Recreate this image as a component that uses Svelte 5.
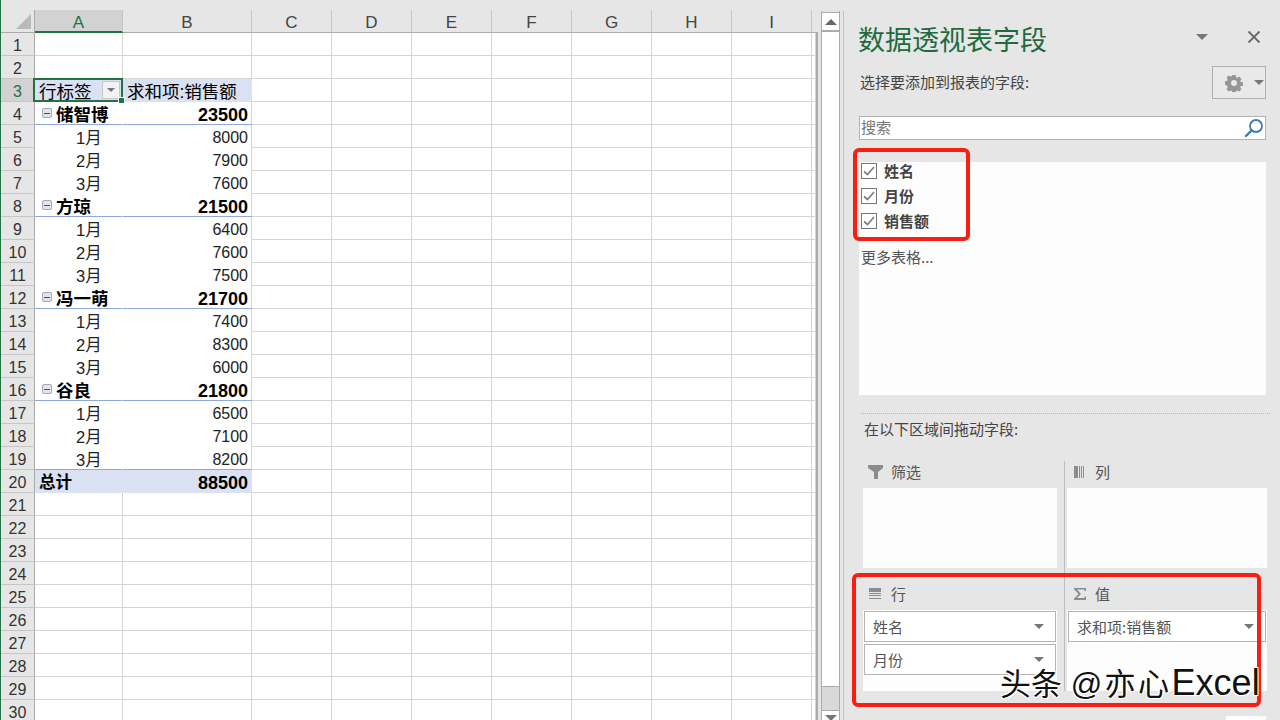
<script>
	const columns = ['A', 'B', 'C', 'D', 'E', 'F', 'G', 'H', 'I', ''];
	const blanks = ['C', 'D', 'E', 'F', 'G', 'H', 'I', ''];

	const groups = [
		{ name: '储智博', total: 23500, months: [8000, 7900, 7600] },
		{ name: '方琼', total: 21500, months: [6400, 7600, 7500] },
		{ name: '冯一萌', total: 21700, months: [7400, 8300, 6000] },
		{ name: '谷良', total: 21800, months: [6500, 7100, 8200] }
	];

	// flatten the pivot into sheet rows, starting at row 4
	const pivotRows = [];
	for (const g of groups) {
		pivotRows.push({ kind: 'group', label: g.name, value: g.total });
		g.months.forEach((v, i) => {
			pivotRows.push({ kind: 'month', label: `${i + 1}月`, value: v });
		});
	}

	const rowNumbers = Array.from({ length: 30 }, (_, i) => i + 1);

	function pivotAt(n) {
		return pivotRows[n - 4];
	}

	const fields = ['姓名', '月份', '销售额'];
</script>

<div class="app">
	<div class="sheet">
		<div class="grid">
			<div class="corner"><span class="corner-tri"></span></div>
			{#each columns as col, i}
				<div class="col-head" class:active={i === 0} class:stub={col === ''}>{col}</div>
			{/each}

			{#each rowNumbers as n}
				{@const row = pivotAt(n)}
				<div class="row-head" class:active={n === 3}>{n}</div>

				{#if n === 3}
					<div class="cell pivot-head a3">
						<span>行标签</span>
						<span class="filter-btn"><i class="tri small"></i></span>
						<span class="handle"></span>
					</div>
					<div class="cell pivot-head">求和项:销售额</div>
				{:else if n === 20}
					<div class="cell total">总计</div>
					<div class="cell total num-bold">88500</div>
				{:else if row && row.kind === 'group'}
					<div class="cell group">
						<span class="collapse"><i></i></span>{row.label}
					</div>
					<div class="cell group num-bold">{row.value}</div>
				{:else if row}
					<div class="cell month" class:before-total={n === 19}>{row.label}</div>
					<div class="cell num" class:before-total={n === 19}>{row.value}</div>
				{:else}
					<div class="cell"></div>
					<div class="cell"></div>
				{/if}

				{#each blanks as _}
					<div class="cell"></div>
				{/each}
			{/each}
		</div>
	</div>

	<div class="scrollbar">
		<div class="scroll-btn top"><i class="tri up"></i></div>
		<div class="scroll-track"></div>
		<div class="scroll-rest"></div>
		<div class="scroll-btn bottom"><i class="tri"></i></div>
	</div>

	<aside class="panel">
		<header class="panel-head">
			<h1>数据透视表字段</h1>
			<i class="tri head-tri"></i>
			<svg class="close" width="14" height="14" viewBox="0 0 14 14">
				<path d="M1.5 1.5l11 11M12.5 1.5l-11 11" stroke="#6a6a6a" stroke-width="1.8" fill="none" />
			</svg>
		</header>

		<div class="choose">
			<span>选择要添加到报表的字段:</span>
			<div class="gear-btn">
				<svg width="18" height="18" viewBox="0 0 18 18">
					<path
						fill="#969696"
						fill-rule="evenodd"
						d="M7.3 1h3.4l.4 2.2 1.3.6 1.9-1.2 2.2 2.3-1.2 1.8.5 1.4 2.2.4v3.2l-2.2.4-.5 1.4 1.2 1.8-2.2 2.3-1.9-1.2-1.3.6-.4 1.9H7.3l-.4-1.9-1.3-.6-1.9 1.2-2.2-2.3 1.2-1.8-.5-1.4L0 10.500V7.300l2.2-.4.5-1.400L1.500 3.700l2.200-2.300 1.900 1.200 1.300-.6zM9 6a3 3 0 1 0 0 6 3 3 0 0 0 0-6z"
					/>
				</svg>
				<i class="tri gear-tri"></i>
			</div>
		</div>

		<div class="search">
			<span>搜索</span>
			<svg width="20" height="20" viewBox="0 0 20 20">
				<circle cx="12" cy="8" r="6" fill="none" stroke="#3f78b4" stroke-width="1.8" />
				<path d="M7.500 12.500L2 18" stroke="#3f78b4" stroke-width="2.400" stroke-linecap="round" />
			</svg>
		</div>

		<div class="field-list">
			{#each fields as f}
				<label class="field">
					<span class="check">
						<svg width="12" height="10" viewBox="0 0 12 10">
							<path d="M1 5.500l3.500 3L11 1" stroke="#808080" stroke-width="1.700" fill="none" />
						</svg>
					</span>
					<b>{f}</b>
				</label>
			{/each}
			<div class="more">更多表格...</div>
		</div>

		<div class="dots"></div>
		<div class="drag-label">在以下区域间拖动字段:</div>

		<div class="areas">
			<section class="area">
				<div class="area-title">
					<svg width="16" height="14" viewBox="0 0 16 14"><path d="M0 0h15v3L10 7v7H6V7L0 3z" fill="#8c8c8c" /></svg>
					<span>筛选</span>
				</div>
				<div class="drop"></div>
			</section>
			<section class="area right">
				<div class="area-title">
					<svg width="14" height="12" viewBox="0 0 14 12">
						<path d="M0 0h4v12H0zM5 0h1v12H5zM7 0h1v12H7zM9 0h1v12H9z" fill="#8c8c8c" />
					</svg>
					<span>列</span>
				</div>
				<div class="drop"></div>
			</section>
			<section class="area lower">
				<div class="area-title">
					<svg width="16" height="11" viewBox="0 0 16 11">
						<path d="M1 0h12v4H1zM1 5h12v1H1zM1 7h12v1H1zM1 10h12v1H1z" fill="#8c8c8c" />
					</svg>
					<span>行</span>
				</div>
				<div class="drop">
					<div class="pill"><span>姓名</span><i class="tri"></i></div>
					<div class="pill"><span>月份</span><i class="tri"></i></div>
				</div>
			</section>
			<section class="area lower right">
				<div class="area-title">
					<svg width="14" height="12" viewBox="0 0 14 12">
						<path d="M0 0h12v3h-1.500V1.500H3L7 6l-4 4h7.500V8.500H12V12H0v-1.200L4.500 6 0 1.200z" fill="#8c8c8c" />
					</svg>
					<span>值</span>
				</div>
				<div class="drop">
					<div class="pill"><span>求和项:销售额</span><i class="tri"></i></div>
				</div>
			</section>
		</div>

		<div class="update-stub"></div>
	</aside>

	<!-- annotations drawn over the screenshot -->
	<div class="mark mark-fields"></div>
	<div class="mark mark-areas"></div>
	<div class="watermark">头条 <span class="wm-handle">@亦心</span><span class="wm-latin">Excel</span></div>
</div>

<style>
	:global(body) {
		margin: 0;
	}

	.app {
		position: relative;
		display: flex;
		width: 1280px;
		height: 720px;
		overflow: hidden;
		background: #e6e6e6;
		font-family: 'Noto Sans CJK SC', 'Liberation Sans', sans-serif;
		color: #444;
	}

	.tri {
		display: block;
		width: 0;
		height: 0;
		border-left: 6px solid transparent;
		border-right: 6px solid transparent;
		border-top: 6px solid #777;
	}

	.tri.small {
		border-left-width: 4px;
		border-right-width: 4px;
		border-top-width: 4px;
	}

	.tri.up {
		border-top: 0;
		border-bottom: 6px solid #666;
	}

	/* sheet */
	.sheet {
		box-sizing: border-box;
		flex: none;
		width: 818px;
		height: 720px;
		padding: 10px 2px 0 0;
		border-left: 1px solid #217346;
		background: linear-gradient(#ababab, #ababab) right bottom / 2px 688px no-repeat;
	}

	.grid {
		display: grid;
		grid-template-columns: 34px 88px 129px repeat(7, 80px) 1fr;
		grid-auto-rows: 23px;
		grid-template-rows: 23px;
		font-family: 'Liberation Sans', 'Noto Sans CJK SC', sans-serif;
		color: #000;
	}

	.corner {
		position: relative;
		box-sizing: border-box;
		background: #e6e6e6;
		border-right: 1px solid #ababab;
		border-bottom: 1px solid #ababab;
	}

	.corner-tri {
		position: absolute;
		right: 3px;
		bottom: 3px;
		width: 0;
		height: 0;
		border-left: 15px solid transparent;
		border-bottom: 15px solid #b9b9b9;
	}

	.col-head {
		box-sizing: border-box;
		display: flex;
		align-items: center;
		justify-content: center;
		padding-top: 3px;
		background: #e6e6e6;
		border-right: 1px solid #c6c6c6;
		border-bottom: 1px solid #ababab;
		font-size: 17px;
		color: #444;
	}

	.col-head.stub {
		border-right: 0;
	}

	.col-head.active {
		background: #d2d2d2;
		border-bottom: 2px solid #217346;
		color: #217346;
		padding-top: 4px;
	}

	.row-head {
		box-sizing: border-box;
		display: flex;
		align-items: center;
		justify-content: center;
		padding-top: 4px;
		background: #e6e6e6;
		border-right: 1px solid #ababab;
		border-bottom: 1px solid #c6c6c6;
		font-size: 16px;
		color: #333;
	}

	.row-head.active {
		background: #d2d2d2;
		color: #217346;
	}

	.cell {
		box-sizing: border-box;
		position: relative;
		display: flex;
		align-items: center;
		background: #fff;
		border-right: 1px solid #d4d4d4;
		border-bottom: 1px solid #d4d4d4;
		white-space: nowrap;
	}

	.pivot-head {
		background: #d9e1f2;
		border-color: #d9e1f2;
		font-size: 17.500px;
		padding-left: 4px;
	}

	.a3 {
		justify-content: space-between;
		padding-right: 1px;
	}

	/* selection frame round A3 */
	.a3::after {
		content: '';
		position: absolute;
		inset: -1px -1px -1px -2px;
		border: 2px solid #217346;
		pointer-events: none;
	}

	.filter-btn {
		display: flex;
		align-items: center;
		justify-content: center;
		box-sizing: border-box;
		width: 18px;
		height: 18px;
		margin-right: 1px;
		background: #f2f2f2;
		border: 1px solid #c8c8c8;
	}

	.handle {
		position: absolute;
		right: -3px;
		bottom: -3px;
		width: 5px;
		height: 5px;
		background: #217346;
		border: 1px solid #fff;
		z-index: 2;
	}

	.group {
		border-right-color: #fff;
		border-bottom-color: #8ea9db;
		font-size: 17.500px;
		font-weight: 700;
		padding-left: 7px;
	}

	.collapse {
		display: flex;
		align-items: center;
		justify-content: center;
		box-sizing: border-box;
		width: 10px;
		height: 10px;
		margin-right: 4px;
		background: #e2e4ea;
		border: 1px solid #a4a9b8;
		border-radius: 2px;
	}

	.collapse i {
		display: block;
		width: 6px;
		height: 1px;
		background: #3c4f7a;
	}

	.month {
		padding: 2px 0 0 41px;
		border-right-color: #fff;
		border-bottom-color: #fff;
		font-size: 16.500px;
		color: #222;
	}

	.num {
		justify-content: flex-end;
		padding: 4px 3px 0 0;
		border-bottom-color: #fff;
		font-size: 16px;
		color: #222;
	}

	.cell.num-bold {
		justify-content: flex-end;
		padding: 4px 3px 0 0;
		border-right-color: #d4d4d4;
		font-size: 18px;
		font-weight: 700;
	}

	.cell.before-total {
		border-bottom-color: #8ea9db;
	}

	.total {
		background: #d9e1f2;
		border-color: #d9e1f2;
		font-size: 16.500px;
		font-weight: 700;
		padding-left: 4px;
	}

	.cell.total.num-bold {
		border-right-color: #d9e1f2;
	}

	/* scrollbar */
	.scrollbar {
		display: flex;
		flex-direction: column;
		box-sizing: border-box;
		flex: none;
		width: 19px;
		height: 720px;
		margin-left: 3px;
		padding-top: 12px;
		border-left: 1px solid #ababab;
		border-right: 1px solid #ababab;
		border-image: linear-gradient(transparent 12px, #ababab 12px) 1;
		background: #e6e6e6;
	}

	.scroll-btn {
		box-sizing: border-box;
		display: flex;
		align-items: center;
		justify-content: center;
		flex: none;
		height: 18px;
		background: #fff;
		border-top: 1px solid #ababab;
	}

	.scroll-track {
		flex: none;
		height: 657px;
		box-sizing: border-box;
		background: #fff;
		border-top: 2px solid #ababab;
		border-bottom: 1px solid #ababab;
	}

	.scroll-rest {
		flex: none;
		height: 23px;
		background: #d9d9d9;
	}

	.scroll-btn.bottom {
		align-items: flex-start;
		padding-top: 4px;
	}

	/* field panel */
	.panel {
		position: relative;
		box-sizing: border-box;
		flex: 1;
		height: 720px;
		margin-left: 3px;
		padding-left: 15px;
		border-left: 1px solid #c0c0c0;
		border-image: linear-gradient(transparent 12px, #c0c0c0 12px) 1;
		font-size: 15px;
		line-height: 20px;
		background: #e6e6e6;
	}

	.panel-head {
		display: flex;
		align-items: flex-start;
		box-sizing: border-box;
		height: 66px;
		padding-top: 27px;
		margin-left: -1px;
	}

	h1 {
		margin: 0;
		font-size: 27px;
		line-height: 24px;
		font-weight: 400;
		color: #1f6b3f;
	}

	.head-tri {
		margin-left: 149px;
		margin-top: 7px;
	}

	.close {
		margin-left: 39px;
		margin-top: 3px;
	}

	.choose {
		display: flex;
		align-items: center;
		justify-content: space-between;
		box-sizing: border-box;
		width: 407px;
		height: 33px;
		margin-bottom: 17px;
		padding-left: 1px;
	}

	.choose > span,
	.search > span {
		margin-top: -2px;
	}

	.gear-btn {
		box-sizing: border-box;
		display: flex;
		align-items: center;
		gap: 11px;
		width: 54px;
		height: 33px;
		padding-left: 12px;
		border: 1px solid #b0b0b0;
		background: #e9e9e9;
	}

	.gear-tri {
		border-left-width: 5px;
		border-right-width: 5px;
		border-top-width: 5px;
	}

	.search {
		box-sizing: border-box;
		display: flex;
		align-items: center;
		justify-content: space-between;
		width: 407px;
		height: 24px;
		padding: 0 1px;
		background: #fff;
		border: 1px solid #b4b4b4;
		color: #777;
	}

	.field-list {
		display: flow-root;
		box-sizing: border-box;
		width: 407px;
		height: 233px;
		margin-top: 22px;
		background: #fdfdfd;
	}

	.field {
		display: flex;
		align-items: center;
		height: 25px;
		color: #444;
	}

	.field:first-child {
		margin-top: -4px;
	}

	.check {
		display: flex;
		align-items: center;
		justify-content: center;
		box-sizing: border-box;
		width: 16px;
		height: 16px;
		margin: 0 7px 0 2px;
		border: 1px solid #777;
		background: #fff;
	}

	.more {
		margin-top: 14px;
		padding-left: 2px;
		color: #555;
	}

	.dots {
		width: 409px;
		margin: 18px 0 0 2px;
		border-top: 1px dotted #b8b8b8;
	}

	.drag-label {
		height: 20px;
		margin: 5px 0 0 5px;
	}

	.areas {
		display: grid;
		grid-template-columns: 202px 202px;
		margin-top: 22px;
		margin-left: 4px;
	}

	.area {
		box-sizing: border-box;
		height: 114px;
		padding-right: 7px;
		border-right: 1px solid #bdbdbd;
	}

	.area.right {
		padding: 0 0 0 2px;
		border-right: 0;
	}

	.area.lower {
		height: 116px;
	}

	.area-title {
		display: flex;
		align-items: center;
		gap: 7px;
		box-sizing: border-box;
		height: 27px;
		padding: 0 0 5px 5px;
		color: #555;
	}

	.area.right .area-title {
		padding-left: 7px;
	}

	.drop {
		height: 80px;
		background: #fdfdfd;
	}

	.area.lower .area-title {
		height: 35px;
		padding-bottom: 0;
		padding-top: 2px;
	}

	.lower .drop {
		box-sizing: border-box;
		height: 81px;
		padding-top: 1px;
	}

	.pill {
		box-sizing: border-box;
		display: flex;
		align-items: center;
		justify-content: space-between;
		height: 31px;
		margin: 0 1px 2px;
		padding: 0 11px 0 8px;
		background: #fff;
		border: 1px solid #b4b4b4;
		color: #555;
	}

	.pill .tri {
		border-left-width: 5px;
		border-right-width: 5px;
		border-top-width: 5px;
	}

	.update-stub {
		position: absolute;
		left: 382px;
		top: 716px;
		width: 40px;
		height: 6px;
		background: #fff;
	}

	/* overlays */
	.mark {
		position: absolute;
		box-sizing: border-box;
		border: 4px solid #f81e12;
		border-radius: 6px;
	}

	.mark-fields {
		left: 853px;
		top: 148px;
		width: 117px;
		height: 93px;
	}

	.mark-areas {
		left: 852px;
		top: 573px;
		width: 409px;
		height: 134px;
	}

	.watermark {
		position: absolute;
		left: 1000px;
		top: 661px;
		font-family: 'Liberation Sans', 'Noto Sans CJK SC', sans-serif;
		font-size: 31px;
		line-height: 44px;
		color: #111;
		white-space: nowrap;
		text-shadow: 1px 1px 0 #fff, -1px -1px 0 #fff, 1px -1px 0 #fff, -1px 1px 0 #fff;
	}

	.wm-handle {
		letter-spacing: 2.500px;
	}

	.wm-latin {
		font-size: 36px;
	}
</style>
